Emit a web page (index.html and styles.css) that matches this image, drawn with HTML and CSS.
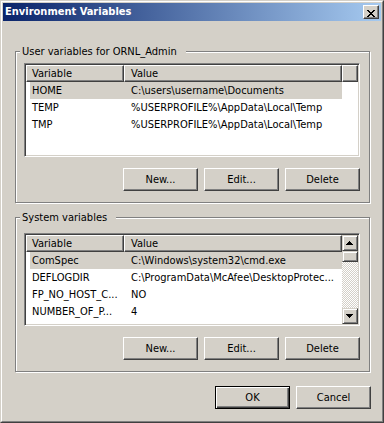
FILE: index.html
```html
<!DOCTYPE html>
<html>
<head>
<meta charset="utf-8">
<title>Environment Variables</title>
<link rel="stylesheet" href="styles.css">
</head>
<body>
<div class="window">
  <div class="frame">
    <div class="titlebar">
      <span class="title">Environment Variables</span>
      <button class="close" aria-label="Close">
        <svg class="close-glyph" width="8" height="7" viewBox="0 0 8 7" shape-rendering="crispEdges">
          <rect x="0" y="0" width="2" height="1"/><rect x="6" y="0" width="2" height="1"/>
          <rect x="1" y="1" width="2" height="1"/><rect x="5" y="1" width="2" height="1"/>
          <rect x="2" y="2" width="4" height="1"/>
          <rect x="3" y="3" width="2" height="1"/>
          <rect x="2" y="4" width="4" height="1"/>
          <rect x="1" y="5" width="2" height="1"/><rect x="5" y="5" width="2" height="1"/>
          <rect x="0" y="6" width="2" height="1"/><rect x="6" y="6" width="2" height="1"/>
        </svg>
      </button>
    </div>
    <div class="content">
      <div class="group group-user">
        <div class="legend">User variables for ORNL_Admin</div>
        <div class="lv lv-user">
          <div class="lv-main">
            <div class="header">
              <div class="hcell h1">Variable</div>
              <div class="hcell h2">Value</div>
              <div class="hcell hfill"></div>
            </div>
            <div class="rows">
              <div class="row sel"><span class="cell1">HOME</span><span class="cell2">C:\users\username\Documents</span></div>
              <div class="row"><span class="cell1">TEMP</span><span class="cell2">%USERPROFILE%\AppData\Local\Temp</span></div>
              <div class="row"><span class="cell1">TMP</span><span class="cell2">%USERPROFILE%\AppData\Local\Temp</span></div>
            </div>
          </div>
        </div>
        <div class="buttons">
          <button class="btn">New...</button>
          <button class="btn">Edit...</button>
          <button class="btn">Delete</button>
        </div>
      </div>

      <div class="group group-sys">
        <div class="legend">System variables</div>
        <div class="lv lv-sys">
          <div class="lv-main">
            <div class="header">
              <div class="hcell h1">Variable</div>
              <div class="hcell h2">Value</div>
            </div>
            <div class="rows">
              <div class="row sel"><span class="cell1">ComSpec</span><span class="cell2">C:\Windows\system32\cmd.exe</span></div>
              <div class="row"><span class="cell1">DEFLOGDIR</span><span class="cell2">C:\ProgramData\McAfee\DesktopProtec...</span></div>
              <div class="row"><span class="cell1">FP_NO_HOST_C...</span><span class="cell2">NO</span></div>
              <div class="row"><span class="cell1">NUMBER_OF_P...</span><span class="cell2">4</span></div>
            </div>
          </div>
          <div class="scrollbar">
            <div class="sb-btn">
              <svg class="arrow" width="8" height="4" viewBox="0 0 8 4" shape-rendering="crispEdges">
                <rect x="3" y="0" width="1" height="1"/><rect x="2" y="1" width="3" height="1"/>
                <rect x="1" y="2" width="5" height="1"/><rect x="0" y="3" width="7" height="1"/>
              </svg>
            </div>
            <div class="sb-thumb"></div>
            <div class="sb-track"></div>
            <div class="sb-btn">
              <svg class="arrow" width="8" height="4" viewBox="0 0 8 4" shape-rendering="crispEdges">
                <rect x="0" y="0" width="7" height="1"/><rect x="1" y="1" width="5" height="1"/>
                <rect x="2" y="2" width="3" height="1"/><rect x="3" y="3" width="1" height="1"/>
              </svg>
            </div>
          </div>
        </div>
        <div class="buttons">
          <button class="btn">New...</button>
          <button class="btn">Edit...</button>
          <button class="btn">Delete</button>
        </div>
      </div>

      <div class="footer">
        <button class="btn default">OK</button>
        <button class="btn">Cancel</button>
      </div>
    </div>
  </div>
</div>
</body>
</html>
```

FILE: styles.css
```css
* { box-sizing: border-box; }
html, body { margin: 0; padding: 0; }
body {
  background: #D4D0C8;
  font-family: "DejaVu Sans Condensed", "DejaVu Sans", sans-serif;
  font-stretch: condensed;
  font-size: 11px;
  color: #000;
}
.window {
  width: 384px;
  height: 423px;
  border: 1px solid;
  border-color: #D4D0C8 #404040 #404040 #D4D0C8;
  background: #D4D0C8;
}
.frame {
  height: 100%;
  border: 1px solid;
  border-color: #fff #808080 #808080 #fff;
  padding: 1px;
  display: flex;
  flex-direction: column;
}
.titlebar {
  height: 18px;
  flex: none;
  background: linear-gradient(to right, #0A246A, #A6CAF0);
  display: flex;
  align-items: center;
  justify-content: space-between;
  padding: 0 2px;
}
.title {
  color: #fff;
  font-weight: bold;
  line-height: 18px;
  white-space: nowrap;
}
.close {
  width: 16px;
  height: 14px;
  padding: 2px 0 0 3px;
  border: 1px solid;
  border-color: #fff #404040 #404040 #fff;
  box-shadow: inset -1px -1px #808080;
  background: #D4D0C8;
  display: block;
}
.close-glyph { display: block; fill: #000; }

.content {
  flex: 1;
  padding: 30px 11px 0 12px;
}
.group {
  border: 1px solid #808080;
  box-shadow: inset 1px 1px #fff, 1px 1px #fff;
  padding: 0 9px 11px 8px;
}
.group-sys { margin-top: 14px; }
.legend {
  width: max-content;
  height: 13px;
  line-height: 13px;
  margin: -7px 0 0 -4px;
  padding: 0 9px 0 2px;
  background: #D4D0C8;
  white-space: nowrap;
}
.lv {
  border: 1px solid;
  border-color: #808080 #fff #fff #808080;
  box-shadow: inset 1px 1px #404040, inset -1px -1px #D4D0C8;
  background: #fff;
  display: flex;
  overflow: hidden;
  padding: 1px;
}
.lv-user { margin-top: 5px; height: 94px; }
.lv-sys { margin-top: 9px; height: 93px; }
.lv-main {
  flex: 1;
  min-width: 0;
  display: flex;
  flex-direction: column;
}
.header { display: flex; height: 17px; flex: none; }
.hcell {
  border: 1px solid;
  border-color: #fff #404040 #404040 #fff;
  box-shadow: inset -1px -1px #808080;
  background: #D4D0C8;
  line-height: 15px;
  padding-left: 5px;
  white-space: nowrap;
  overflow: hidden;
}
.h1 { width: 98px; flex: none; }
.h2 { width: 218px; flex: none; padding-left: 6px; }
.hfill { flex: 1; }
.rows { flex: 1; overflow: hidden; }
.row {
  display: flex;
  height: 17px;
  line-height: 17px;
  margin-left: 4px;
  width: 312px;
  white-space: nowrap;
}
.row.sel { background: #D4D0C8; }
.cell1 { width: 94px; flex: none; padding-left: 2px; overflow: hidden; }
.cell2 { flex: 1; min-width: 0; padding-left: 7px; overflow: hidden; text-overflow: ellipsis; }

.scrollbar {
  width: 16px;
  flex: none;
  display: flex;
  flex-direction: column;
}
.sb-btn, .sb-thumb {
  flex: none;
  border: 1px solid;
  border-color: #D4D0C8 #404040 #404040 #D4D0C8;
  box-shadow: inset 1px 1px #fff, inset -1px -1px #808080;
  background: #D4D0C8;
}
.sb-btn {
  height: 16px;
  display: flex;
  align-items: center;
  justify-content: center;
}
.sb-thumb { height: 11px; }
.sb-track {
  flex: 1;
  background: repeating-conic-gradient(#D4D0C8 0 25%, #fff 0 50%) 0 0 / 2px 2px;
}
.arrow { display: block; fill: #000; }

.buttons {
  display: flex;
  justify-content: flex-end;
  gap: 6px;
  margin-top: 11px;
}
.btn {
  width: 75px;
  height: 23px;
  padding: 0;
  font: inherit;
  font-stretch: inherit;
  color: #000;
  border: 1px solid;
  border-color: #fff #404040 #404040 #fff;
  box-shadow: inset -1px -1px #808080;
  background: #D4D0C8;
}
.btn.default {
  border-color: #000;
  box-shadow: inset 1px 1px #fff, inset -1px -1px #404040, inset -2px -2px #808080;
}
.footer {
  display: flex;
  justify-content: flex-end;
  gap: 6px;
  margin-top: 14px;
  margin-right: -1px;
}
```
